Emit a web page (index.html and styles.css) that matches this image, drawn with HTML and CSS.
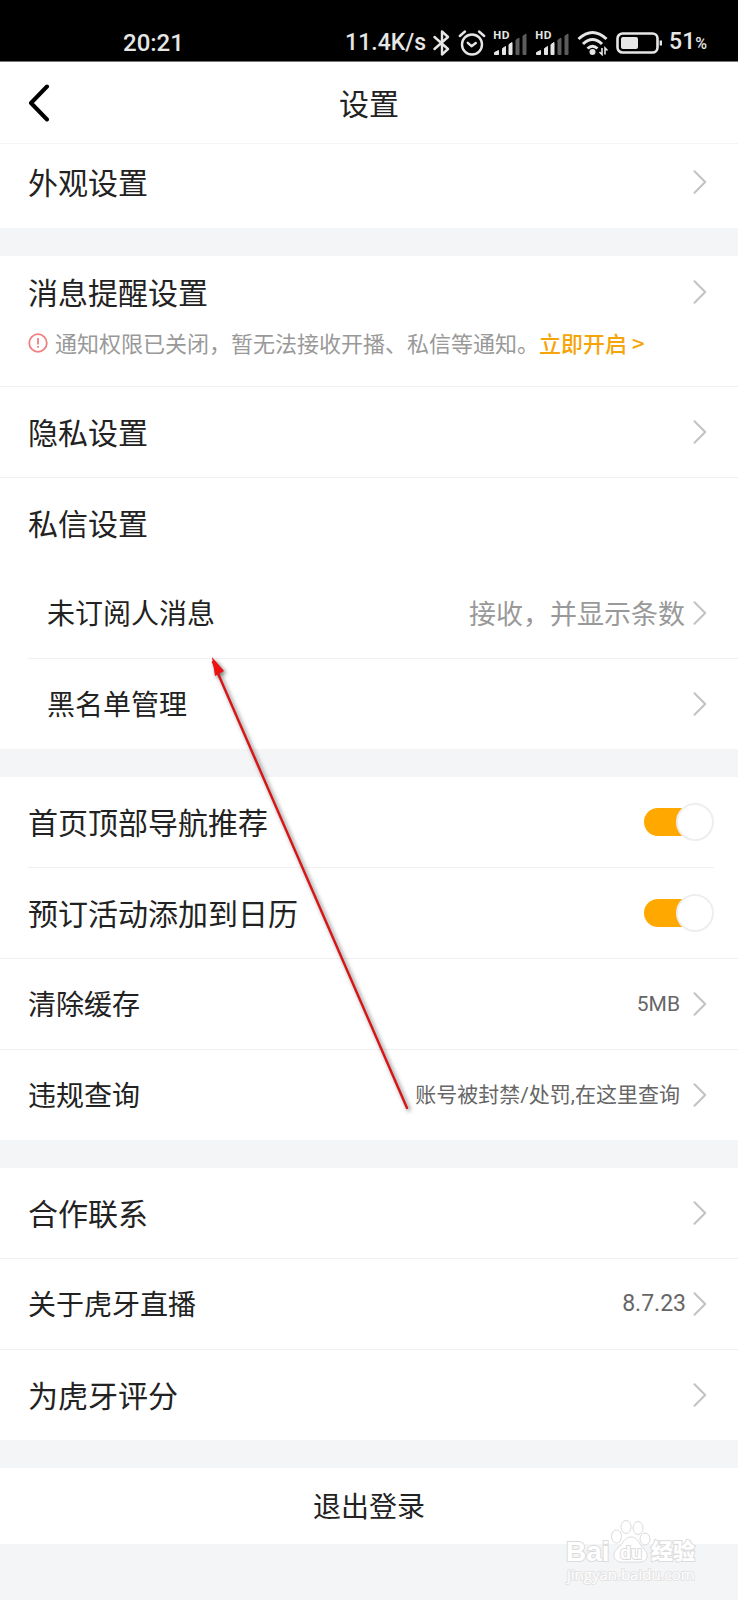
FILE: index.html
```html
<!DOCTYPE html>
<html lang="zh-CN">
<head>
<meta charset="utf-8">
<meta name="viewport" content="width=device-width, initial-scale=1">
<title>设置</title>
<link rel="stylesheet" href="styles.css">
</head>
<body>
<svg class="symbols" aria-hidden="true">
  <symbol id="chevron" viewBox="0 0 14 24"><path d="M1.5 1.2 12.2 12 1.5 22.8" fill="none" stroke="#c2c2c2" stroke-width="2" stroke-linecap="round" stroke-linejoin="round"/></symbol>
  <symbol id="bars" viewBox="0 0 35 26">
    <path d="M1.500 24.500V22.500L5.500 20.500V24.500Z" fill="#e6e6e6" stroke="#e6e6e6"/>
    <path d="M9.500 24.500V18.500L12.500 16.500V24.500Z M16 24.500V14.500L19 12.500V24.500Z" fill="#e6e6e6" stroke="#e6e6e6"/>
    <path d="M23 24.500V10L26 8V24.500Z M30 24.500V6L33 4V24.500Z" fill="#5c5c5c" stroke="#5c5c5c"/>
  </symbol>
</svg>

<div class="screen">
  <div class="status">
    <time class="clock">20:21</time>
    <div class="indicators">
      <span>11.4K/s</span>
      <svg class="bluetooth" viewBox="0 0 18 28" aria-label="蓝牙"><path d="M1.500 8 15 20 9 25.500V2.500L15 8 1.500 20" fill="none" stroke="#e6e6e6" stroke-width="2.400" stroke-linejoin="round" stroke-linecap="round"/></svg>
      <svg class="alarm" viewBox="0 0 28 28" aria-label="闹钟"><g fill="none" stroke="#e6e6e6" stroke-width="2.400" stroke-linecap="round" stroke-linejoin="round"><circle cx="14" cy="15.500" r="10"/><path d="M9.800 13.800 13.500 17.200 17.800 14"/><path d="M1.800 7 7 2.500M26.200 7 21 2.500"/></g></svg>
      <svg class="signal" viewBox="0 0 35 26" aria-label="信号一"><use href="#bars"/><text x="0" y="9" class="hd">HD</text></svg>
      <svg class="signal" viewBox="0 0 35 26" aria-label="信号二"><use href="#bars"/><text x="0" y="9" class="hd">HD</text></svg>
      <svg class="wifi" viewBox="0 0 32 26" aria-label="无线网络"><g fill="none" stroke="#e6e6e6" stroke-width="3"><path d="M1.500 9Q15.500-4 29.500 9"/><path d="M6 14Q15.500 5 25 14"/><path d="M10.500 18.500Q15.500 14 20.500 18.500"/></g><circle cx="15.500" cy="22" r="3" fill="#e6e6e6"/><path d="M25 18V24.500L22.500 22M28 24.500V18L30.500 20.500" fill="none" stroke="#e6e6e6" stroke-width="1.600"/></svg>
      <svg class="battery" viewBox="0 0 46 22" aria-label="电池"><rect x="1.500" y="1.500" width="40" height="19" rx="5" fill="none" stroke="#e6e6e6" stroke-width="2.600"/><rect x="5" y="5" width="17" height="12" rx="2" fill="#e6e6e6"/><path d="M44.800 8.500V13.500" stroke="#e6e6e6" stroke-width="2.400"/></svg>
      <span class="percent">51<small>%</small></span>
    </div>
  </div>

  <header class="header">
    <button class="back" type="button" aria-label="返回"><svg viewBox="0 0 22 38"><path d="M19 2.500 3 19 19 35.500" fill="none" stroke="#000" stroke-width="4" stroke-linecap="round" stroke-linejoin="round"/></svg></button>
    <h1>设置</h1>
  </header>

  <main>
    <section class="group">
      <a class="row first" href="#appearance"><span class="label">外观设置</span><svg class="chevron"><use href="#chevron"/></svg></a>
    </section>

    <section class="group">
      <div class="notify">
        <a class="row tall" href="#notify"><span class="label">消息提醒设置</span><svg class="chevron"><use href="#chevron"/></svg></a>
        <p class="notice">
          <svg viewBox="0 0 20 20" aria-hidden="true"><circle cx="10" cy="10" r="8.800" fill="none" stroke="#f08080" stroke-width="1.800"/><path d="M10 5V11.500M10 13V14.800" stroke="#f08080" stroke-width="1.800"/></svg>
          <span>通知权限已关闭，暂无法接收开播、私信等通知。</span><a href="#enable">立即开启 &gt;</a>
        </p>
      </div>
      <a class="row" href="#privacy"><span class="label">隐私设置</span><svg class="chevron"><use href="#chevron"/></svg></a>
      <h2 class="row plain"><span class="label">私信设置</span></h2>
      <a class="row sub inset" href="#strangers"><span class="label">未订阅人消息</span><span class="value soft">接收，并显示条数</span><svg class="chevron"><use href="#chevron"/></svg></a>
      <a class="row sub" href="#blacklist"><span class="label">黑名单管理</span><svg class="chevron"><use href="#chevron"/></svg></a>
    </section>

    <section class="group">
      <div class="row toggle inset both"><label class="label" for="nav">首页顶部导航推荐</label><input class="switch" id="nav" type="checkbox" role="switch" checked></div>
      <div class="row toggle"><label class="label" for="calendar">预订活动添加到日历</label><input class="switch" id="calendar" type="checkbox" role="switch" checked></div>
      <a class="row small" href="#cache"><span class="label">清除缓存</span><span class="value note">5MB</span><svg class="chevron"><use href="#chevron"/></svg></a>
      <a class="row small" href="#violations"><span class="label">违规查询</span><span class="value note">账号被封禁/处罚,在这里查询</span><svg class="chevron"><use href="#chevron"/></svg></a>
    </section>

    <section class="group">
      <a class="row" href="#contact"><span class="label">合作联系</span><svg class="chevron"><use href="#chevron"/></svg></a>
      <a class="row small" href="#about"><span class="label">关于虎牙直播</span><span class="value version">8.7.23</span><svg class="chevron"><use href="#chevron"/></svg></a>
      <a class="row" href="#rate"><span class="label">为虎牙评分</span><svg class="chevron"><use href="#chevron"/></svg></a>
    </section>

    <button class="logout" type="button">退出登录</button>
  </main>

  <svg class="pointer" viewBox="0 0 210 464" aria-hidden="true">
    <path d="M9 12 203 458" stroke="#d91414" stroke-width="2.400" stroke-linecap="round"/>
    <path d="M8 7 20 21 11 26Z" fill="#ee1111"/>
  </svg>

  <svg class="watermark" viewBox="0 0 140 70" aria-label="Baidu经验">
    <g class="mark">
      <text class="bai" x="4" y="45">Bai</text>
      <ellipse cx="54.500" cy="20.500" rx="5" ry="6.500"/><ellipse cx="64" cy="11" rx="5" ry="6.500"/><ellipse cx="76" cy="12" rx="5" ry="6.500"/><ellipse cx="83" cy="23" rx="5" ry="6"/>
      <path d="M69 21C62 21 61 28 56 32C48 39 53 46 60 46H77C86 46 88 38 81 32C76 27 76 21 69 21Z"/>
      <text class="du" x="58" y="43">du</text>
      <text class="exp" x="89" y="43">经验</text>
      <text class="url" x="5" y="64">jingyan.baidu.com</text>
    </g>
  </svg>
</div>
</body>
</html>
```
FILE: styles.css
```css
*, *::before, *::after { box-sizing: border-box; }

body {
  margin: 0;
  background: #f4f5f7;
  color: #222;
  font-family: "Noto Sans CJK SC", sans-serif;
  font-size: 30px;
}

a { color: inherit; text-decoration: none; }
button { border: 0; background: none; padding: 0; font: inherit; color: inherit; cursor: pointer; }
svg { display: block; flex: none; }
.symbols { position: absolute; width: 0; height: 0; }
.screen { position: relative; min-height: 100vh; }

/* Status bar */
.status {
  display: flex;
  align-items: flex-end;
  justify-content: space-between;
  height: 62px;
  padding: 0 31px 3px 123px;
  background: #000;
  border-bottom: 1px solid #777;
  color: #e6e6e6;
  font: 500 24px/30px Roboto, sans-serif;
}
.indicators { display: flex; align-items: center; gap: 7px; height: 30px; font-size: 23px; }
.clock { height: 30px; }
.bluetooth { width: 18px; height: 28px; }
.alarm { width: 28px; height: 28px; }
.signal { width: 35px; height: 26px; overflow: visible; }
.hd { font: 700 11px "Open Sans", sans-serif; fill: #e6e6e6; }
.wifi { width: 32px; height: 26px; }
.battery { width: 46px; height: 22px; }
.percent small { font-size: 16px; }

/* Title bar */
.header {
  display: grid;
  grid-template-columns: 1fr auto 1fr;
  align-items: center;
  height: 82px;
  padding: 0 28px;
  background: #fff;
  border-bottom: 1px solid #f4f4f4;
}
.header h1 { margin: 0; padding-bottom: 2px; font-size: 30px; font-weight: 400; line-height: 40px; }
.back { justify-self: start; }
.back svg { width: 22px; height: 38px; }

/* Setting groups */
.group { margin-bottom: 28px; background: #fff; }
.row {
  position: relative;
  display: flex;
  align-items: center;
  height: 91px;
  margin: 0;
  padding: 0 31px 0 28px;
  border-bottom: 1px solid #f0f0f0;
  font-size: 30px;
  font-weight: 400;
  line-height: 40px;
}
.row:last-child { height: 90px; border-bottom: 0; }
.group .first { height: 84px; padding-bottom: 8px; }
.row .label { flex: 1; padding-bottom: 3px; }
.group .plain { height: 90px; border-bottom: 0; }
.sub { padding-left: 47px; font-size: 28px; }
.small { font-size: 28px; }
.toggle { padding-right: 24px; }
.inset { border-bottom-color: transparent; }
.inset::after {
  content: "";
  position: absolute;
  left: 28px;
  right: 0;
  bottom: -1px;
  height: 1px;
  background: #f0f0f0;
}
.both::after { right: 24px; }
.chevron { width: 14px; height: 24px; }
.value { color: #666; }
.soft { margin-right: 8px; color: #999; font-size: 27px; }
.note { margin-right: 13px; font-size: 21px; font-family: Roboto, "Noto Sans CJK SC", sans-serif; }
.version { margin-right: 7px; font-size: 23px; font-family: Roboto, sans-serif; }

.notify { border-bottom: 1px solid #f0f0f0; padding-bottom: 31px; }
.group .tall { height: 74px; padding-bottom: 2px; border-bottom: 0; }
.notice {
  display: flex;
  align-items: center;
  margin: 0;
  padding: 0 28px;
  color: #999;
  font-size: 22px;
  line-height: 25px;
}
.notice svg { width: 20px; height: 20px; margin-right: 7px; }
.notice a { color: #f5a50a; font-weight: 500; }

/* Switch */
.switch {
  appearance: none;
  display: grid;
  align-items: center;
  width: 70px;
  height: 38px;
  margin: 0;
}
.switch::before,
.switch::after { content: ""; grid-area: 1 / 1; }
.switch::before { width: 60px; height: 28px; border-radius: 14px; background: #ccc; }
.switch::after { width: 38px; height: 38px; border: 2px solid #eee; border-radius: 50%; background: #fff; }
.switch:checked::before { background: #ffa800; }
.switch:checked::after { justify-self: end; }

.logout { display: block; width: 100%; height: 76px; padding-bottom: 2px; background: #fff; font-size: 28px; line-height: 40px; }

/* Overlays */
.pointer {
  position: absolute;
  left: 204px;
  top: 650px;
  width: 210px;
  height: 464px;
  pointer-events: none;
  filter: drop-shadow(2px 2px 2px rgba(0, 0, 0, .55));
}
.watermark { position: absolute; right: 36px; top: 1516px; width: 140px; height: 70px; pointer-events: none; }
.mark { fill: #fff; stroke: #dcdcdc; stroke-width: 1; }
.mark text { paint-order: stroke; stroke-width: 2; }
.bai { font: 700 28px "Liberation Sans", sans-serif; }
.du { font: 700 18px "Liberation Sans", sans-serif; }
.exp { font: 900 22px "Noto Sans CJK SC", sans-serif; }
.mark .url { font: 400 15px "Open Sans", sans-serif; stroke: #e4e4e4; }
```
